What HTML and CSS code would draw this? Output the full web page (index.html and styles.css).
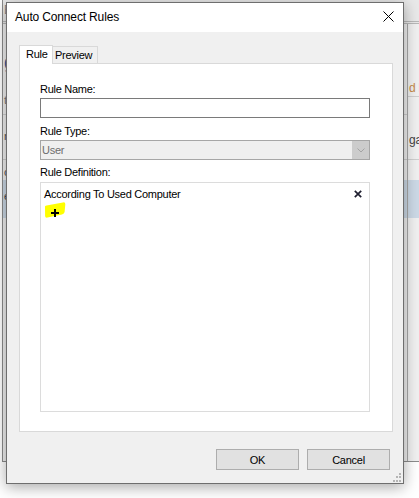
FILE: index.html
```html
<!DOCTYPE html>
<html lang="en">

<head>
    <meta charset="UTF-8">
    <meta name="viewport" content="width=device-width, initial-scale=1.0">
    <title>Auto Connect Rules</title>
    <link rel="stylesheet" href="styles.css">
</head>

<body>
    <div class="desktop">

        <!-- window behind the dialog -->
        <div class="backwin">
            <div class="bw-top"><span class="bw-e">E</span></div>
            <div class="bw-main">
                <div class="bw-left">
                    <div class="bw-row bw-row-a"><span class="bw-g">g</span><span class="bw-t">t</span></div>
                    <div class="bw-row bw-row-b"><span>n</span></div>
                    <div class="bw-row bw-row-c"><span>o</span></div>
                    <div class="bw-band"><span>e</span></div>
                </div>
                <div class="bw-right">
                    <div class="bw-row bw-row-d"><span class="bw-o">d</span> <span class="bw-b">l</span></div>
                    <div class="bw-row bw-row-e"><span>ga</span></div>
                    <div class="bw-row bw-row-c"></div>
                    <div class="bw-band"></div>
                </div>
            </div>
        </div>

        <div class="dialog">
            <div class="titlebar">
                <span class="title">Auto Connect Rules</span>
                <svg class="close" width="11" height="11" viewBox="0 0 11 11">
                    <path d="M0.5 0.5L10.5 10.5M10.5 0.5L0.5 10.5" stroke="#000" stroke-width="1" fill="none" />
                </svg>
            </div>

            <div class="dlg-body">
                <div class="tabs">
                    <div class="tab tab-active">Rule</div>
                    <div class="tab tab-plain">Preview</div>
                </div>
                <div class="panel">
                    <div class="lbl">Rule Name:</div>
                    <div class="textbox"></div>

                    <div class="lbl lbl-type">Rule Type:</div>
                    <div class="combo">
                        <span class="combo-text">User</span>
                        <span class="combo-btn">
                            <svg width="8" height="5" viewBox="0 0 8 5">
                                <path d="M0.5 0.5L4 4L7.5 0.5" stroke="#a4a4a4" stroke-width="1" fill="none" />
                            </svg>
                        </span>
                    </div>

                    <div class="lbl lbl-def">Rule Definition:</div>
                    <div class="defbox">
                        <div class="def-row">
                            <span>According To Used Computer</span>
                            <svg class="def-x" width="8" height="8" viewBox="0 0 8 8">
                                <path d="M0.8 0.8L7.2 7.2M7.2 0.8L0.8 7.2" stroke="#1f1f30" stroke-width="1.7" fill="none" />
                            </svg>
                        </div>
                        <svg class="add" width="22" height="17" viewBox="0 0 22 17">
                            <path d="M1 5 Q0.5 3.8 2.5 3.4 L19 0.4 Q21.6 0 21.3 2.6 L20.6 10 Q20.3 12 18 12.4 L3.5 15.6 Q1.2 16.2 1.1 14 Z" fill="#ffff00" />
                            <rect x="7" y="10" width="8" height="2" fill="#000" />
                            <rect x="10" y="7" width="2" height="8" fill="#000" />
                        </svg>
                    </div>
                </div>
            </div>

            <div class="footer">
                <button class="btn">OK</button>
                <button class="btn">Cancel</button>
            </div>

            <svg class="grip" width="8" height="9" viewBox="0 0 8 9">
                <rect x="6" y="0" width="2" height="2" fill="#b4b4b4" />
                <rect x="3" y="3" width="2" height="2" fill="#b4b4b4" />
                <rect x="6" y="3" width="2" height="2" fill="#b4b4b4" />
                <rect x="0" y="7" width="2" height="2" fill="#b4b4b4" />
                <rect x="3" y="7" width="2" height="2" fill="#b4b4b4" />
                <rect x="6" y="7" width="2" height="2" fill="#b4b4b4" />
            </svg>
        </div>

    </div>
</body>

</html>
```

FILE: styles.css
```css
* {
    margin: 0;
    padding: 0;
    box-sizing: border-box;
}

body {
    background: #fff;
    font-family: "Liberation Sans", Arial, sans-serif;
    font-size: 11px;
    letter-spacing: -0.27px;
    color: #000;
}

.desktop {
    position: relative;
    width: 419px;
    height: 498px;
    overflow: hidden;
    background: #fff;
}

/* background window */

.backwin {
    position: absolute;
    left: 2px;
    top: 0;
    width: 430px;
    height: 462px;
    background: #f0f0f0;
    border-left: 1px solid #8c8c8c;
    border-bottom: 1px solid #8c8c8c;
    display: flex;
    flex-direction: column;
}

.bw-top {
    height: 24px;
    background: #e9e9e9;
    border-bottom: 3px double #b8b8b8;
}

.bw-e {
    display: block;
    padding-left: 1px;
    line-height: 20px;
    font-size: 12px;
    color: #8a8a8a;
}

.bw-main {
    flex: 1;
    display: flex;
}

.bw-left {
    width: 404px;
    display: flex;
    flex-direction: column;
}

.bw-right {
    flex: 1;
    border-left: 1px solid #a8a8a8;
    display: flex;
    flex-direction: column;
}

.bw-row {
    border-bottom: 1px solid #cfcfcf;
    color: #555;
    padding-left: 1px;
}

.bw-row-a {
    height: 91px;
    display: flex;
    flex-direction: column;
    padding-top: 28px;
}

.bw-g {
    font-size: 20px;
    line-height: 20px;
    color: #2d5c9c;
}

.bw-t {
    margin-top: 22px;
    color: #777;
}

.bw-row-b {
    height: 45px;
    padding-top: 15px;
}

.bw-row-c {
    height: 20px;
    border-bottom: none;
    padding-top: 6px;
}

.bw-row-d {
    height: 73px;
    padding-top: 57px;
    font-size: 12px;
}

.bw-row-e {
    height: 63px;
    padding-top: 36px;
    font-size: 12px;
    color: #444;
}

.bw-o {
    color: #c48a4a;
}

.bw-b {
    color: #3a66b0;
}

.bw-band {
    height: 38px;
    background: #ccd9e6;
    padding: 10px 0 0 1px;
    color: #444;
}

/* dialog */

.dialog {
    position: absolute;
    left: 6px;
    top: 2px;
    width: 398px;
    height: 482px;
    background: #f0f0f0;
    border: 1px solid #6e6e6e;
    box-shadow: 0 3px 14px rgba(0, 0, 0, 0.35);
    display: flex;
    flex-direction: column;
}

.titlebar {
    height: 29px;
    background: #fff;
    display: flex;
    align-items: center;
    justify-content: space-between;
    padding: 0 9px 0 8px;
}

.title {
    font-size: 12px;
    letter-spacing: -0.15px;
    line-height: 29px;
}

.close {
    margin-bottom: 3px;
}

.dlg-body {
    padding: 13px 10px 0 12px;
}

.tabs {
    display: flex;
    align-items: flex-end;
    height: 18px;
    position: relative;
    z-index: 1;
}

.tab {
    border: 1px solid #d9d9d9;
    border-bottom: none;
}

.tab-active {
    width: 34px;
    height: 19px;
    margin-bottom: -1px;
    background: #fff;
    padding-left: 6px;
    line-height: 17px;
}

.tab-plain {
    width: 45px;
    height: 17px;
    border-left: none;
    padding: 1px 0 0 2px;
    line-height: 15px;
}

.panel {
    height: 369px;
    background: #fff;
    border: 1px solid #d9d9d9;
    padding: 17px 22px 0 20px;
    display: flex;
    flex-direction: column;
}

.lbl {
    line-height: 16px;
}

.lbl-type {
    margin-top: 5px;
}

.lbl-def {
    margin-top: 4px;
}

.textbox {
    height: 20px;
    margin-top: 1px;
    border: 1px solid #7a7a7a;
    background: #fff;
}

.combo {
    height: 20px;
    margin-top: 1px;
    border: 1px solid #a6a6a6;
    background: #efefef;
    color: #6d6d6d;
    display: flex;
}

.combo-text {
    flex: 1;
    padding-left: 1px;
    line-height: 18px;
}

.combo-btn {
    width: 17px;
    background: #cccccc;
    display: flex;
    align-items: center;
    justify-content: center;
}

.defbox {
    height: 230px;
    margin-top: 2px;
    border: 1px solid #dcdcdc;
    padding: 3px 7px 0 3px;
}

.def-row {
    display: flex;
    justify-content: space-between;
    align-items: center;
    line-height: 16px;
}

.add {
    display: block;
}

.footer {
    flex: 1;
    display: flex;
    justify-content: flex-end;
    gap: 8px;
    padding: 17px 13px 0 0;
}

.btn {
    width: 83px;
    height: 21px;
    background: #e1e1e1;
    border: 1px solid #adadad;
    font: inherit;
    letter-spacing: inherit;
    color: #000;
}

.grip {
    position: absolute;
    right: 2px;
    bottom: 1px;
}
```
